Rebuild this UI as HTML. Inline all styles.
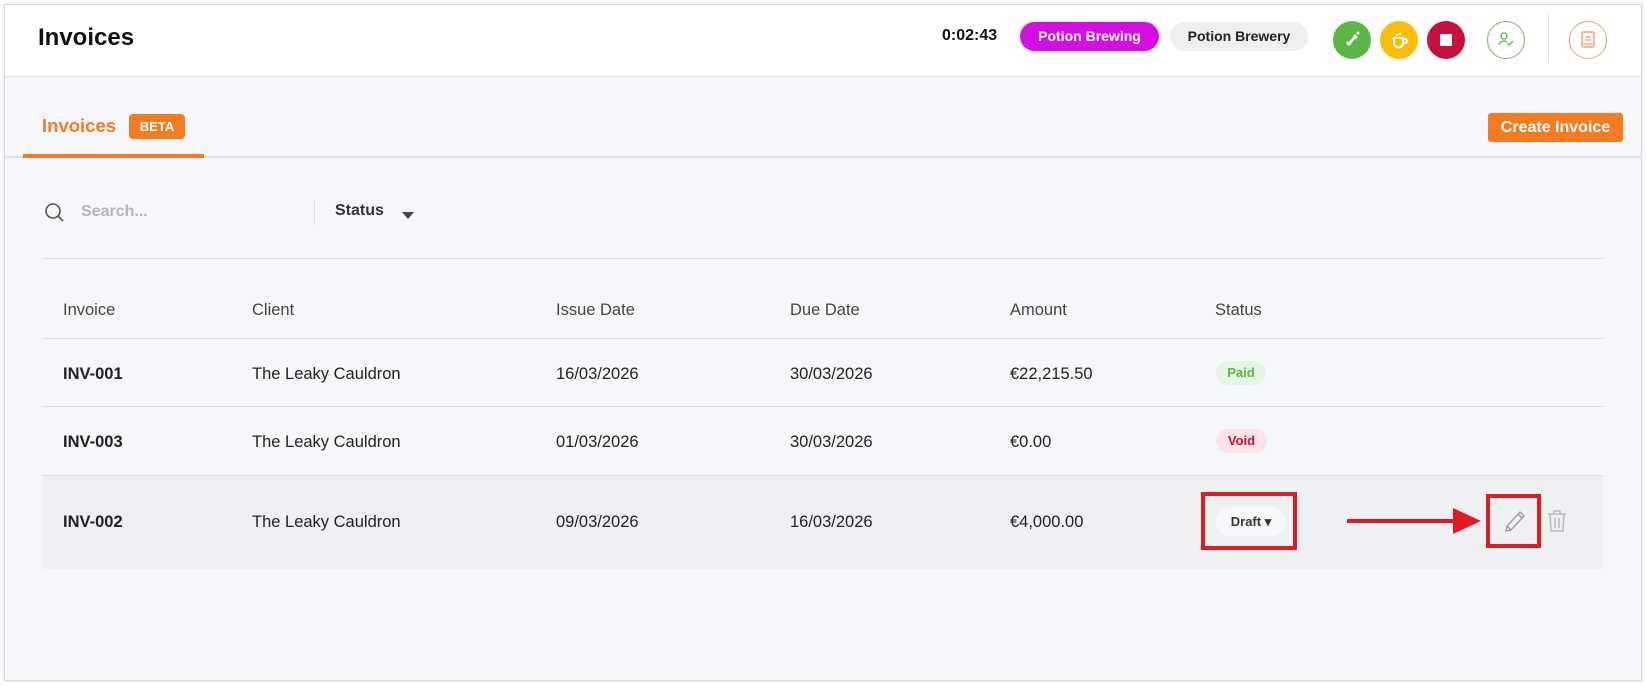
<!DOCTYPE html>
<html><head><meta charset="utf-8"><style>
*{box-sizing:border-box;margin:0;padding:0}
body{width:1646px;height:686px;background:#fff;font-family:"Liberation Sans",sans-serif;position:relative;overflow:hidden;color:#111}
.frame{position:absolute;left:4px;top:4px;width:1638px;height:677px;border:1px solid #d8d8d8;background:#f6f7fa;box-shadow:0 0 3px rgba(0,0,0,.15)}
.hdr{position:absolute;left:0;top:0;right:0;height:72px;background:#fff;border-bottom:1px solid #e3e4e8}
.a{position:absolute}
.t{font-size:16.5px;color:#222}
.b{font-weight:bold}
.pill{position:absolute;border-radius:15px;font-size:14px;font-weight:bold;text-align:center}
.circ{position:absolute;width:38px;height:38px;border-radius:50%;top:16px}
.line{position:absolute;height:1px;background:#dcdde2}
</style></head><body>
<div class="frame">
<div class="hdr">
 <div class="a b" style="left:33px;top:19px;font-size:24px;color:#111">Invoices</div>
 <div class="a b" style="left:937px;top:22px;font-size:16px">0:02:43</div>
 <div class="pill" style="left:1015px;top:17px;width:139px;height:29px;line-height:29px;background:#d60ee6;color:#fff">Potion Brewing</div>
 <div class="pill" style="left:1165px;top:17px;width:138px;height:29px;line-height:29px;background:#efefef;color:#222">Potion Brewery</div>
 <div class="circ" style="left:1328px;background:#5cb646"><svg width="38" height="38"><path d="M15 24l8-9M14 21l3 3M21 14l3 3M24 13l2-2" stroke="#fff" stroke-width="2.5" fill="none"/></svg></div>
 <div class="circ" style="left:1375px;background:#fbbd0a"><svg width="38" height="38"><path d="M14 17h9v5a4 4 0 0 1-9 0zM23 18h2a2 2 0 0 1 0 4h-2M17 13v2M20 12v2" stroke="#fff" stroke-width="2" fill="none"/></svg></div>
 <div class="circ" style="left:1422px;background:#c8103e"><div class="a" style="left:13px;top:13px;width:12px;height:12px;background:#fff;border-radius:1px"></div></div>
 <div class="circ" style="left:1482px;border:1.5px solid #6cc05c"><svg width="36" height="36"><circle cx="16" cy="14" r="3" stroke="#6cc05c" stroke-width="1.5" fill="none"/><path d="M11 23c1-4 6-5 8-3M19 21l2 2 4-4" stroke="#6cc05c" stroke-width="1.5" fill="none"/></svg></div>
 <div class="a" style="left:1543px;top:8px;width:1px;height:50px;background:#e3e3e3"></div>
 <div class="circ" style="left:1564px;border:1.5px solid #f3a06a"><svg width="36" height="36"><rect x="12" y="10" width="12" height="15" rx="1.5" stroke="#f3a06a" stroke-width="1.5" fill="none"/><path d="M15 15h6M15 18h6M12 22h12" stroke="#f3a06a" stroke-width="1.3"/></svg></div>
</div>
<div class="a b" style="left:37px;top:110px;font-size:18.5px;color:#f47b20">Invoices</div>
<div class="a b" style="left:124px;top:109px;width:56px;height:25px;line-height:25px;text-align:center;background:#f47b20;color:#fff;border-radius:4px;font-size:13px">BETA</div>
<div class="line" style="left:0;right:0;top:151px;height:2px;background:#e2e3e7"></div>
<div class="a" style="left:18px;top:149px;width:181px;height:4px;background:#f47b20"></div>
<div class="a b" style="left:1483px;top:108px;width:135px;height:29px;line-height:29px;text-align:center;background:#f47b20;color:#fff;border-radius:3px;font-size:16px">Create Invoice</div>
<svg class="a" style="left:39px;top:197px" width="22" height="22"><circle cx="9" cy="9" r="7" stroke="#555" stroke-width="1.6" fill="none"/><path d="M14 14l5 5" stroke="#555" stroke-width="1.6"/></svg>
<div class="a b" style="left:76px;top:198px;font-size:16px;color:#b3b5bb">Search...</div>
<div class="a" style="left:309px;top:195px;width:1px;height:25px;background:#ddd"></div>
<div class="a b" style="left:330px;top:197px;font-size:16px;color:#333">Status</div>
<svg class="a" style="left:396px;top:205px" width="14" height="10"><path d="M1 2h12l-6 7z" fill="#444"/></svg>
<div class="line" style="left:38px;top:253px;width:1560px"></div>
<div class="a t" style="left:58px;top:296px;color:#444">Invoice</div>
<div class="a t" style="left:247px;top:296px;color:#444">Client</div>
<div class="a t" style="left:551px;top:296px;color:#444">Issue Date</div>
<div class="a t" style="left:785px;top:296px;color:#444">Due Date</div>
<div class="a t" style="left:1005px;top:296px;color:#444">Amount</div>
<div class="a t" style="left:1210px;top:296px;color:#444">Status</div>
<div class="line" style="left:38px;top:333px;width:1560px"></div>
<div class="a t b" style="left:58px;top:360px">INV-001</div>
<div class="a t" style="left:247px;top:360px">The Leaky Cauldron</div>
<div class="a t" style="left:551px;top:360px">16/03/2026</div>
<div class="a t" style="left:785px;top:360px">30/03/2026</div>
<div class="a t" style="left:1005px;top:360px">€22,215.50</div>
<div class="pill" style="left:1211px;top:356px;width:50px;height:24px;line-height:24px;background:#e5f5e3;color:#5cb646;font-size:13px">Paid</div>
<div class="line" style="left:38px;top:401px;width:1560px"></div>
<div class="a t b" style="left:58px;top:428px">INV-003</div>
<div class="a t" style="left:247px;top:428px">The Leaky Cauldron</div>
<div class="a t" style="left:551px;top:428px">01/03/2026</div>
<div class="a t" style="left:785px;top:428px">30/03/2026</div>
<div class="a t" style="left:1005px;top:428px">€0.00</div>
<div class="pill" style="left:1211px;top:424px;width:51px;height:24px;line-height:24px;background:#fbe3e8;color:#c8103e;font-size:13px">Void</div>
<div class="a" style="left:38px;top:470px;width:1560px;height:94px;background:#eef0f4;border-top:1px solid #dcdde2"></div>
<div class="a t b" style="left:58px;top:508px">INV-002</div>
<div class="a t" style="left:247px;top:508px">The Leaky Cauldron</div>
<div class="a t" style="left:551px;top:508px">09/03/2026</div>
<div class="a t" style="left:785px;top:508px">16/03/2026</div>
<div class="a t" style="left:1005px;top:508px">€4,000.00</div>
<div class="pill" style="left:1211px;top:502px;width:70px;height:29px;line-height:29px;background:#f7f8fa;color:#333;font-size:13px">Draft ▾</div>
<div class="a" style="left:1196px;top:487px;width:96px;height:58px;border:4px solid #e01b22"></div>
<div class="a" style="left:1342px;top:514px;width:110px;height:4px;background:#e01b22"></div>
<svg class="a" style="left:1448px;top:503px" width="30" height="26"><path d="M0 0l28 13L0 26z" fill="#e01b22"/></svg>
<div class="a" style="left:1481px;top:489px;width:55px;height:54px;border:4px solid #e01b22"></div>
<svg class="a" style="left:1498px;top:503px" width="24" height="26"><path d="M3 23l1-5L17 4l4 4L8 22zM15 6l4 4M4 18l4 4" stroke="#999" stroke-width="1.3" fill="none"/></svg>
<svg class="a" style="left:1541px;top:504px" width="22" height="24"><path d="M2 5h18M8 5V2h6v3M4 5l1 17h12l1-17M9 9v10M13 9v10" stroke="#bbb" stroke-width="1.6" fill="none"/></svg>
</div>
</body></html>
